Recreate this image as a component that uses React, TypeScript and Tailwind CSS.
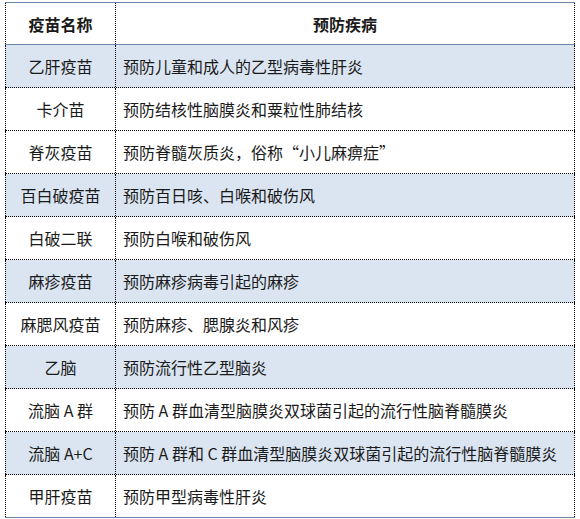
import React from "react";

const rows: [string, string, boolean][] = [
  ["乙肝疫苗", "预防儿童和成人的乙型病毒性肝炎", true],
  ["卡介苗", "预防结核性脑膜炎和粟粒性肺结核", false],
  ["脊灰疫苗", "预防脊髓灰质炎，俗称“小儿麻痹症”", false],
  ["百白破疫苗", "预防百日咳、白喉和破伤风", true],
  ["白破二联", "预防白喉和破伤风", false],
  ["麻疹疫苗", "预防麻疹病毒引起的麻疹", true],
  ["麻腮风疫苗", "预防麻疹、腮腺炎和风疹", false],
  ["乙脑", "预防流行性乙型脑炎", true],
  ["流脑 A 群", "预防 A 群血清型脑膜炎双球菌引起的流行性脑脊髓膜炎", false],
  ["流脑 A+C", "预防 A 群和 C 群血清型脑膜炎双球菌引起的流行性脑脊髓膜炎", true],
  ["甲肝疫苗", "预防甲型病毒性肝炎", false],
];

export default function App() {
  return (
    <div
      className="w-[580px] h-[519px] bg-white pt-[2px] pl-[5px] text-[16px] text-[#1a1a1a]"
      style={{ fontFamily: '"Noto Sans CJK SC", "Noto Sans", sans-serif' }}
    >
      <div className="w-[570px] border-y border-solid border-[#6a86aa]">
        <div className="flex h-[42px] border-b border-solid border-[#6a86aa] font-bold">
          <div className="w-[111px] flex items-center justify-center border-x border-dotted border-black">
            疫苗名称
          </div>
          <div className="flex-1 flex items-center justify-center border-r border-dotted border-black">
            预防疾病
          </div>
        </div>
        {rows.map(([a, b, shaded], i) => (
          <div
            key={i}
            className={
              "flex " +
              (shaded ? "bg-[#dbe5f1] " : "bg-white ") +
              (i < rows.length - 1 ? "h-[43px] border-b border-dotted border-black" : "h-[42px]")
            }
          >
            <div className="w-[111px] flex items-center justify-center border-x border-dotted border-black whitespace-pre">
              {a}
            </div>
            <div className="flex-1 flex items-center pl-[7px] border-r border-dotted border-black whitespace-pre">
              {b}
            </div>
          </div>
        ))}
      </div>
    </div>
  );
}
